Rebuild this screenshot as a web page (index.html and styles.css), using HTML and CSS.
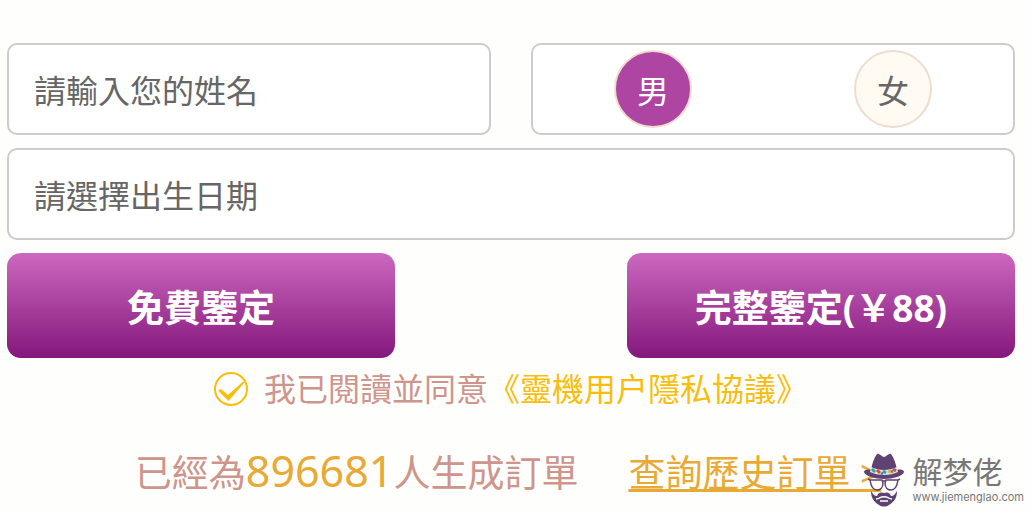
FILE: index.html
```html
<!DOCTYPE html>
<html lang="zh-Hant">
<head>
<meta charset="utf-8">
<meta name="viewport" content="width=device-width, initial-scale=1">
<title>免費鑒定</title>
<link rel="stylesheet" href="styles.css">
</head>
<body>
<main class="page">
  <form class="form">
    <div class="row">
      <input class="field" type="text" name="name" aria-label="姓名" placeholder="請輸入您的姓名">
      <div class="field gender" role="radiogroup" aria-label="性別">
        <label class="gender-option"><input type="radio" name="gender" value="m" checked><span>男</span></label>
        <label class="gender-option"><input type="radio" name="gender" value="f"><span>女</span></label>
      </div>
    </div>
    <input class="field" type="text" name="birthday" aria-label="出生日期" placeholder="請選擇出生日期">
    <div class="row">
      <button class="submit" type="submit">免費鑒定</button>
      <button class="submit" type="button">完整鑒定(￥88)</button>
    </div>
    <div class="consent">
      <label class="consent-label">
        <span class="tick">
          <input type="checkbox" name="agree" checked>
          <svg viewBox="0 0 34 34" aria-hidden="true"><circle cx="17" cy="17" r="16" fill="none" stroke="#f9bd0b" stroke-width="2"/><path d="M4 18.500 7 17l7 6L29 9.500l1.500 1L14.500 29Z" fill="#f9bd0b"/></svg>
        </span>
        <span>我已閱讀並同意</span>
      </label><a class="policy" href="#policy">《靈機用户隱私協議》</a>
    </div>
  </form>
  <div class="stats">
    <p class="orders">已經為<strong class="count">896681</strong>人生成訂單</p>
    <a class="history" href="#history">查詢歷史訂單 &gt;</a>
  </div>
  <div class="brand" lang="zh-Hans">
    <svg class="brand-mark" viewBox="0 0 40 54" aria-hidden="true">
      <path d="M7 17C8 11 10 5 13 1c2-1 5 3 7 3s5-4 7-3c3 4 5 10 6 16 4-1 7 0 7 2-1 4-11 7-20 7S1 23 0 19c0-2 3-3 7-2Z" fill="#5d4272"/>
      <path d="M7 14c8 4 18 4 26 0l1 5c-8 4-20 4-28 0Z" fill="#eee0d0"/>
      <g stroke-width="3" fill="none"><path d="m8 16 3 3M19 18l3 2" stroke="#24a9b5"/><path d="m13 17 3 3M29 16l3 2" stroke="#df493d"/><path d="m24 18 3 1" stroke="#e7b43a"/><path d="m17 20 2 1M27 19l2-1" stroke="#348bc0"/></g>
      <g fill="none" stroke="#5d4272" stroke-width="1.500"><path d="M6 27h12l1 3c0 5-3 7-6 7s-6-3-7-10ZM34 27H22l-1 3c0 5 3 7 6 7s6-3 7-10ZM18 28h4M6 27l-2-1M34 27l2-1"/></g>
      <path d="M7 38c2 3 3 5 6 5 1-4 5-4 7-3 2-1 6-1 7 3 3 0 4-2 6-5 0 7-3 11-8 14-3 2-7 2-10 0-5-3-8-7-8-14Z" fill="#5d4272"/>
      <path d="M12 46c4 0 5-3 8-2 3-1 4 2 8 2M16 48h8" fill="none" stroke="#fefefd" stroke-width="1.500"/>
    </svg>
    <div class="brand-text">
      <span class="brand-name">解梦佬</span>
      <span class="brand-url">www.jiemenglao.com</span>
    </div>
  </div>
</main>
</body>
</html>
```
FILE: styles.css
```css
* {
  box-sizing: border-box;
}

body {
  margin: 0;
  background: #fefefd;
  color: #666;
  font-family: "Noto Sans", "Noto Sans CJK TC", sans-serif;
  font-size: 32px;
}

input,
button {
  font: inherit;
}

.page {
  position: relative;
  padding: 43px 17px 8px 7px;
}

.form {
  display: flex;
  flex-direction: column;
  gap: 13px;
}

.row {
  display: flex;
  justify-content: space-between;
}

.field {
  width: 100%;
  height: 92px;
  padding: 2px 25px 0;
  border: 2px solid #ccc;
  border-radius: 10px;
  background: #fff;
  color: #666;
}

.row .field {
  width: 48%;
}

.field::placeholder {
  color: #666;
  opacity: 1;
}

.gender {
  display: grid;
  grid-template-columns: 1fr 1fr;
  place-items: center;
  padding: 0;
}

.gender-option {
  display: grid;
  place-items: center;
  cursor: pointer;
}

.gender-option > * {
  grid-area: 1 / 1;
}

.gender-option input {
  appearance: none;
  width: 78px;
  height: 78px;
  margin: 0;
  border: 2px solid #efdccf;
  border-radius: 50%;
  background: #fffaf2;
}

.gender-option input:checked {
  background: #ae45a2;
}

.gender-option span {
  z-index: 1;
}

.gender-option input:checked + span {
  color: #fff;
}

.submit {
  width: 38.5%;
  height: 105px;
  padding: 0;
  border: 0;
  border-radius: 14px;
  background: linear-gradient(#cc68bf, #84177c);
  color: #fff;
  font-size: 37px;
  font-weight: 700;
}

.consent {
  display: flex;
  justify-content: center;
  line-height: 36px;
}

.consent-label {
  display: flex;
  align-items: center;
  gap: 16px;
  color: #ce958c;
}

.tick {
  display: grid;
}

.tick > * {
  grid-area: 1 / 1;
  width: 34px;
  height: 34px;
  margin: 0;
}

.tick input {
  appearance: none;
}

.policy {
  color: #f9bd0b;
  text-decoration: none;
}

.stats {
  display: flex;
  justify-content: center;
  align-items: baseline;
  gap: 50px;
  margin-top: 34px;
  padding-right: 6px;
  font-size: 37px;
  line-height: 60px;
}

.orders {
  margin: 0;
  color: #ce958c;
}

.count {
  color: #e9aa35;
  font-size: 43px;
  font-weight: 400;
}

.history {
  color: #e9aa35;
  text-decoration-thickness: 3px;
  text-decoration-skip-ink: none;
}

.brand {
  position: absolute;
  right: 8px;
  bottom: 4px;
  display: flex;
  align-items: center;
  gap: 8px;
}

.brand-mark {
  width: 40px;
  height: 54px;
}

.brand-text {
  display: flex;
  flex-direction: column;
  color: #777;
  font-family: "Inter", "Noto Sans CJK SC", sans-serif;
}

.brand-name {
  font-size: 30px;
  line-height: 34px;
}

.brand-url {
  font-size: 11px;
  line-height: 16px;
}
```
